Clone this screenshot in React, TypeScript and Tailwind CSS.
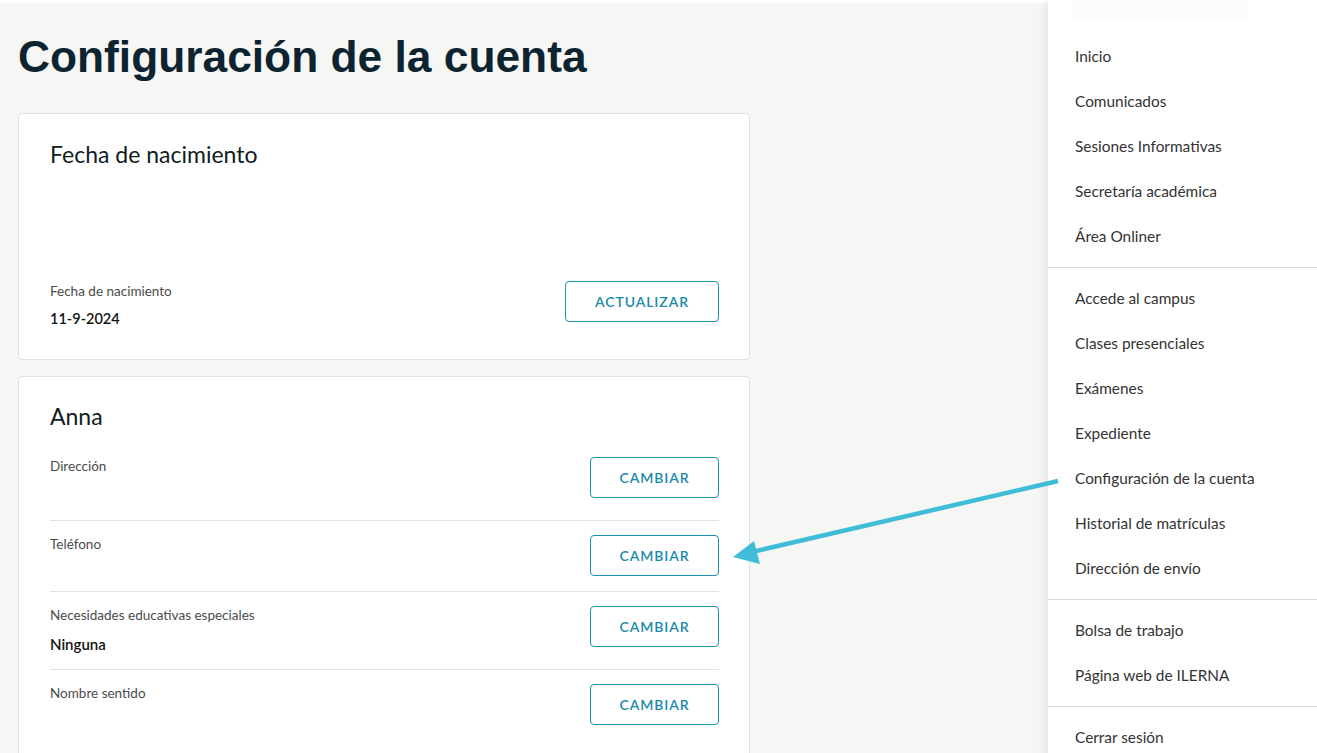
import React from "react";

const lato = { fontFamily: "Lato, 'Open Sans', sans-serif" };

function OutlineButton({ label, wide }: { label: string; wide?: boolean }) {
  return (
    <button
      className={`${wide ? "w-[154px]" : "w-[129px]"} h-[41px] shrink-0 rounded-[4px] border border-[#1490b0] bg-white text-[14px] font-semibold tracking-[0.9px] text-[#1a8aa9]`}
      style={lato}
    >
      {label}
    </button>
  );
}

function Row({
  label,
  value,
  hasValue,
  last,
  first,
}: {
  label: string;
  value?: string;
  hasValue?: boolean;
  last?: boolean;
  first?: boolean;
}) {
  return (
    <div
      className={`flex items-start justify-between ${first ? "pt-0" : "pt-[14px]"} pb-[15px] ${
        last ? "" : "border-b border-[#dce4e8]"
      }`}
    >
      <div className="flex flex-col">
        <div className="text-[13.5px] leading-[18px] text-[#4b4b4b]">{label}</div>
        {hasValue && (
          <div className="mt-[10px] h-[20px] text-[15px] font-semibold leading-[20px] text-[#141414]">
            {value}
          </div>
        )}
      </div>
      <OutlineButton label="CAMBIAR" />
    </div>
  );
}

const groups: string[][] = [
  ["Inicio", "Comunicados", "Sesiones Informativas", "Secretaría académica", "Área Onliner"],
  [
    "Accede al campus",
    "Clases presenciales",
    "Exámenes",
    "Expediente",
    "Configuración de la cuenta",
    "Historial de matrículas",
    "Dirección de envío",
  ],
  ["Bolsa de trabajo", "Página web de ILERNA"],
  ["Cerrar sesión"],
];

export default function App() {
  return (
    <div className="relative flex h-[753px] w-[1317px] items-start overflow-hidden bg-[#f6f6f4]" style={lato}>
      {/* main */}
      <div className="w-[1048px] shrink-0">
        <div className="h-[3px] bg-white" />
        <div className="pl-[18px]">
          <h1
            className="mt-[32px] text-[44.3px] font-bold leading-[44px] text-[#0d2430]"
            style={{ fontFamily: "'Liberation Sans', Arial, sans-serif" }}
          >
            Configuración de la cuenta
          </h1>

          <div className="mt-[34px] flex w-[732px] flex-col gap-[16px]">
            {/* card 1 */}
            <div className="rounded-[4px] border border-[#d8e4e9] bg-white pb-[30px] pl-[31px] pr-[30px] pt-[26px]">
              <h2 className="text-[23px] font-normal leading-[28px] text-[#101c22]">Fecha de nacimiento</h2>
              <div className="mt-[113px] flex items-start justify-between">
                <div className="flex flex-col">
                  <div className="mt-[1px] text-[13.5px] leading-[18px] text-[#4b4b4b]">Fecha de nacimiento</div>
                  <div className="mt-[9px] text-[14.5px] font-semibold leading-[20px] text-[#141414]">11-9-2024</div>
                </div>
                <OutlineButton label="ACTUALIZAR" wide />
              </div>
            </div>

            {/* card 2 */}
            <div className="rounded-[4px] border border-[#d8e4e9] bg-white pb-[30px] pl-[31px] pr-[30px] pt-[25px]">
              <h2 className="text-[23px] font-normal leading-[28px] text-[#101c22]">Anna</h2>
              <div className="mt-[27px] flex flex-col">
                <Row first label="Dirección" value="" hasValue />
                <Row label="Teléfono" />
                <Row label="Necesidades educativas especiales" value="Ninguna" hasValue />
                <Row last label="Nombre sentido" value="" hasValue />
              </div>
            </div>
          </div>
        </div>
      </div>

      {/* sidebar */}
      <aside className="min-h-[753px] w-[269px] shrink-0 bg-white shadow-[-3px_0_8px_rgba(0,0,0,0.07)]">
        <div className="h-[26px] pl-[24px]">
          <div className="h-[22px] w-[175px] bg-[#fcfcfc]" />
        </div>
        {groups.map((g, gi) => (
          <div key={gi} className={`py-[8px] ${gi > 0 ? "border-t border-[#dcdcdc]" : ""}`}>
            {g.map((item) => (
              <div key={item} className="flex h-[45px] items-center pl-[27px] text-[15.4px] text-[#333333]">
                {item}
              </div>
            ))}
          </div>
        ))}
      </aside>

      {/* annotation arrow */}
      <svg
        className="pointer-events-none absolute left-0 top-0"
        width="1317"
        height="753"
        viewBox="0 0 1317 753"
      >
        <line x1="1058" y1="481" x2="752" y2="552" stroke="#3fbdd8" strokeWidth="4.5" strokeLinecap="butt" />
        <polygon points="733,557 754,541 760,564" fill="#3fbdd8" />
      </svg>
    </div>
  );
}
